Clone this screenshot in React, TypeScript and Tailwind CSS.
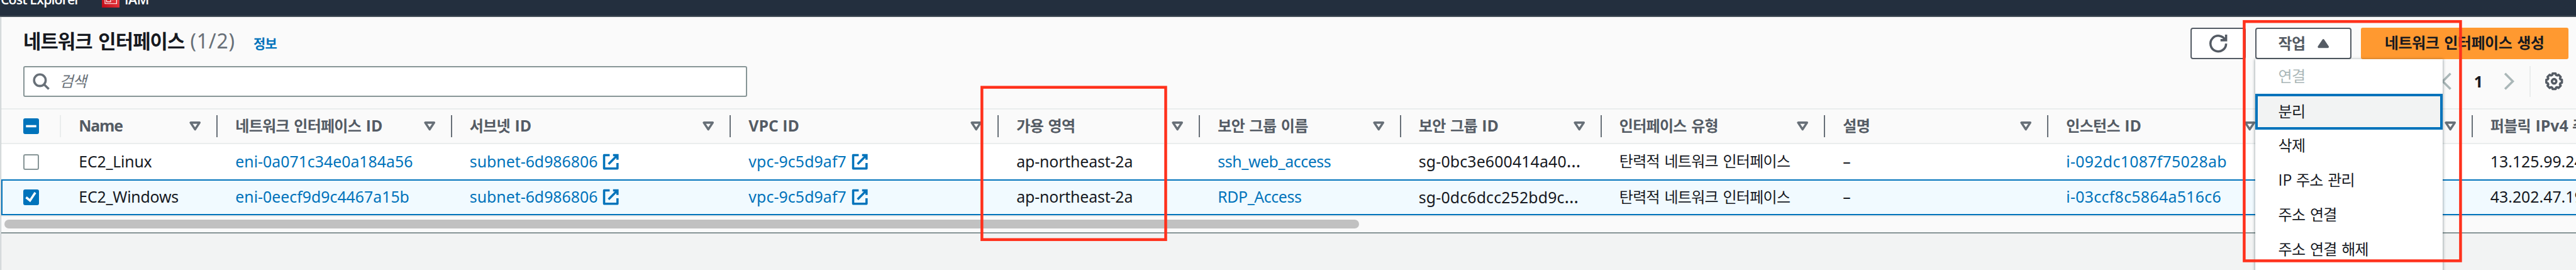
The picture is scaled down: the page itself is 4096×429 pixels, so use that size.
import type { ReactNode } from "react";

const GRID =
  "grid grid-cols-[95px_249px_372.5px_443.5px_426px_320px_319.5px_319px_355.5px_355px_355.5px_319px_1fr]";

/** Hangul runs are set a little tighter than the Latin text around them. */
function T({ children }: { children: string }) {
  return (
    <>
      {children.split(/([가-힣][가-힣 ]*)/).map((part, i) =>
        /[가-힣]/.test(part) ? (
          <span key={i} className="text-[0.966em] tracking-[-0.03em] [word-spacing:0.085em]">
            {part}
          </span>
        ) : (
          part
        ),
      )}
    </>
  );
}

function Icon({ children, className = "" }: { children: ReactNode; className?: string }) {
  return (
    <svg
      viewBox="0 0 16 16"
      className={`size-[28.4px] shrink-0 overflow-visible ${className}`}
      fill="none"
      stroke="currentColor"
      strokeWidth="2"
    >
      {children}
    </svg>
  );
}

function SortIcon() {
  return (
    <Icon className="text-[#687078]">
      <path d="M4 5h8l-4 6-4-6z" strokeLinejoin="round" />
    </Icon>
  );
}

function ExternalIcon() {
  return (
    <Icon className="ml-[7px]">
      <path d="M10 2h4v4M6 10l8-8" />
      <path d="M14 9.048V14H2V2h5" strokeLinejoin="round" />
    </Icon>
  );
}

const gear =
  Array.from({ length: 8 }, (_, k) =>
    [
      [-17, 5.9],
      [-11, 7.1],
      [11, 7.1],
      [17, 5.9],
    ].map(([offset, radius]) => {
      const a = ((k * 45 + offset) * Math.PI) / 180;
      return `${(8 + radius * Math.cos(a)).toFixed(2)} ${(8 + radius * Math.sin(a)).toFixed(2)}`;
    }),
  )
    .flat()
    .map((p, i) => (i ? "L" : "M") + p)
    .join("") + "Z";

function Checkbox({ state }: { state: "on" | "off" | "mixed" }) {
  if (state === "off") {
    return <span className="block size-[25px] rounded-[3px] border-2 border-[#879596] bg-white" />;
  }
  return (
    <span className="block size-[25px] rounded-[3px] bg-[#0073bb]">
      <svg viewBox="0 0 14 14" className="size-[25px]" fill="none" stroke="#fff" strokeWidth="2">
        <path d={state === "on" ? "M2.5 7L6 9.9L10.7 2.8" : "M2.4 7h9.2"} />
      </svg>
    </span>
  );
}

const headers = [
  "Name",
  "네트워크 인터페이스 ID",
  "서브넷 ID",
  "VPC ID",
  "가용 영역",
  "보안 그룹 이름",
  "보안 그룹 ID",
  "인터페이스 유형",
  "설명",
  "인스턴스 ID",
  "",
  "퍼블릭 IPv4 주소",
];

/** Letter spacing of the body cells, one entry per column. */
const tracking = [
  "tracking-[-0.2px]",
  "",
  "",
  "tracking-[0.1px]",
  "tracking-[-0.15px]",
  "tracking-[-0.4px]",
  "tracking-[0.15px]",
  "",
  "",
  "tracking-[0.3px]",
  "",
  "",
];

type Row = { selected: boolean; cells: { text: string; link?: boolean; external?: boolean }[] };

const rows: Row[] = [
  {
    selected: false,
    cells: [
      { text: "EC2_Linux" },
      { text: "eni-0a071c34e0a184a56", link: true },
      { text: "subnet-6d986806", link: true, external: true },
      { text: "vpc-9c5d9af7", link: true, external: true },
      { text: "ap-northeast-2a" },
      { text: "ssh_web_access", link: true },
      { text: "sg-0bc3e600414a40…" },
      { text: "탄력적 네트워크 인터페이스" },
      { text: "–" },
      { text: "i-092dc1087f75028ab", link: true },
      { text: "" },
      { text: "13.125.99.24" },
    ],
  },
  {
    selected: true,
    cells: [
      { text: "EC2_Windows" },
      { text: "eni-0eecf9d9c4467a15b", link: true },
      { text: "subnet-6d986806", link: true, external: true },
      { text: "vpc-9c5d9af7", link: true, external: true },
      { text: "ap-northeast-2a" },
      { text: "RDP_Access", link: true },
      { text: "sg-0dc6dcc252bd9c…" },
      { text: "탄력적 네트워크 인터페이스" },
      { text: "–" },
      { text: "i-03ccf8c5864a516c6", link: true },
      { text: "" },
      { text: "43.202.47.19" },
    ],
  },
];

const menuItems = ["삭제", "IP 주소 관리", "주소 연결", "주소 연결 해제"];

function TableRow({ row }: { row: Row }) {
  return (
    <div
      className={
        row.selected
          ? "h-[57px] border-y-2 border-l-2 border-[#0073bb] bg-[#f1faff]"
          : "h-[56px] bg-white"
      }
    >
      <div className={`${GRID} h-full ${row.selected ? "-ml-[2px]" : ""}`}>
        <div className="flex items-center pl-[35px]">
          <Checkbox state={row.selected ? "on" : "off"} />
        </div>
        {row.cells.map((c, i) => (
          <div
            key={i}
            className={`flex items-center overflow-hidden pl-[28.3px] ${c.link ? "text-[#0073bb]" : ""}`}
          >
            <span className={`pb-[3px] ${tracking[i]}`}>
              {c.text.endsWith("…") ? (
                <>
                  {c.text.slice(0, -1)}
                  <span className="text-[28.5px]">…</span>
                </>
              ) : (
                <T>{c.text}</T>
              )}
            </span>
            {c.external && <ExternalIcon />}
          </div>
        ))}
      </div>
    </div>
  );
}

export default function App() {
  return (
    <div className="relative h-[429px] w-[4096px] overflow-hidden bg-[#f2f3f3] font-['Noto_Sans','Noto_Sans_CJK_KR',sans-serif] text-[24.85px] leading-[34px] whitespace-nowrap text-[#16191f]">
      <nav className="flex h-[27px] items-start overflow-hidden border-b-2 border-[#545b64] bg-[#232f3e] pl-[1px] font-['Open_Sans'] text-[21.3px] leading-[28px] font-semibold text-white">
        <span className="-mt-[15.5px] w-[160.5px] tracking-[-0.9px]">Cost Explorer</span>
        <svg viewBox="0 0 32 32" className="-mt-[16px] size-[28.4px]">
          <defs>
            <linearGradient id="iam" x1="0" y1="1" x2="1" y2="0">
              <stop offset="0" stopColor="#bd0816" />
              <stop offset="1" stopColor="#ff5252" />
            </linearGradient>
          </defs>
          <rect width="32" height="32" fill="url(#iam)" />
          <g fill="none" stroke="#fff" strokeWidth="1.3">
            <path d="M5.6 7.5h20.8v17H5.6z" />
            <path d="M8.5 16h7.2v5.2H8.5zM10 16v-2.5a2 2 0 0 1 4 0V16M19.5 15v3.6M18 17h4" />
          </g>
        </svg>
        <span className="-mt-[15.5px] ml-[8px] tracking-[-0.4px]">IAM</span>
      </nav>

      <div className="flex">
        <div className="h-[402px] w-[2px] bg-white" />
        <main className="flex-1 shadow-[0_0_2px_1px_rgba(0,28,36,0.35)]">
          <header className="h-[147px] border-b-2 border-[#eaeded] bg-[#fafafa] pt-[17px] pr-[12.4px] pl-[35px]">
            <div className="flex h-[50px] items-center justify-between">
              <h1 className="flex items-baseline pb-[5px] text-[31.9px] leading-[40px] font-bold">
                <T>네트워크 인터페이스</T>
                <span className="ml-[9px] font-normal tracking-[0.8px] text-[#687078]">(1/2)</span>
                <a className="ml-[29px] text-[21.7px] text-[#0073bb]">
                  <T>정보</T>
                </a>
              </h1>
              <div className="flex gap-[14.5px] font-bold tracking-[0.22px]">
                <button className="flex h-[50px] w-[88.5px] items-center justify-center rounded-[4px] border-2 border-[#545b64] bg-white text-[#545b64]">
                  <Icon>
                    <path d="M10 5h5V0M15 8a7 7 0 1 1-.7-3" />
                  </Icon>
                </button>
                <div className="relative">
                  <button className="flex h-[50px] w-[153.5px] items-center rounded-[4px] border-2 border-[#545b64] bg-white pl-[35px] text-[#545b64]">
                    <span className="pb-[2px]">
                      <T>작업</T>
                    </span>
                    <Icon className="ml-[15px]">
                      <path d="M4 11h8L8 5z" fill="currentColor" strokeLinejoin="round" />
                    </Icon>
                  </button>
                  <div className="absolute top-[50px] left-0 z-10 h-[400px] w-[298.5px] bg-white font-normal tracking-normal shadow-[0_1px_4px_1px_rgba(0,28,36,0.35)]">
                    <div className="flex h-[55px] items-center pb-[2px] pl-[37px] text-[#aab7b8]">
                      <T>연결</T>
                    </div>
                    <div className="-mb-[2px] flex h-[57px] items-center border-4 border-[#0073bb] bg-[#f2f3f3] pb-[2px] pl-[33px]">
                      <T>분리</T>
                    </div>
                    {menuItems.map((m) => (
                      <div
                        key={m}
                        className="flex h-[55px] items-center pb-[2px] pl-[37px] font-['Open_Sans','Noto_Sans_CJK_KR',sans-serif]"
                      >
                        <span>
                          <T>{m}</T>
                        </span>
                      </div>
                    ))}
                  </div>
                </div>
                <button className="flex h-[50px] w-[330px] items-center justify-center rounded-[3px] bg-[#ff9930] pb-[2px] tracking-[0.3px]">
                  <span className="text-[24px] tracking-[-0.45px] [word-spacing:2.1px]">
                    네트워크 인터페이스 생성
                  </span>
                </button>
              </div>
            </div>

            <div className="mt-[11px] flex h-[49px] items-center justify-between">
              <div className="flex h-[49px] w-[1150.5px] items-center rounded-[3px] border-2 border-[#879596] bg-white pl-[12px] text-[#687078]">
                <Icon>
                  <circle cx="7" cy="7" r="5.2" />
                  <path d="M15 15l-4.5-4.5" />
                </Icon>
                <span className="ml-[15px] pb-[2px] italic">
                  <T>검색</T>
                </span>
              </div>
              <div className="flex items-center pr-[8px] text-[#aab7b8]">
                <Icon>
                  <path d="M11 1L4 8l7 7" />
                </Icon>
                <span className="w-[71px] pb-[2px] text-center font-bold text-[#16191f]">1</span>
                <Icon>
                  <path d="M4 1l7 7-7 7" />
                </Icon>
                <span className="mr-[23px] ml-[17.5px] h-[49px] w-[2px] bg-[#eaeded]" />
                <Icon className="text-[#545b64]">
                  <path d={gear} strokeLinejoin="round" />
                  <circle cx="8" cy="8" r="2" />
                </Icon>
              </div>
            </div>
          </header>

          <section>
            <div
              className={`${GRID} h-[55px] border-b-2 border-[#eaeded] bg-[#fafafa] font-['Open_Sans','Noto_Sans_CJK_KR',sans-serif] font-bold text-[#545b64]`}
            >
              <div className="flex items-center justify-between pl-[35px]">
                <Checkbox state="mixed" />
                <span className="h-[35px] w-[2px] bg-[#eaeded]" />
              </div>
              {headers.map((h, i) => (
                <div key={i} className="flex items-center overflow-hidden pl-[28.3px]">
                  <span className={`flex-1 pb-[3px] ${i === 0 ? "tracking-[-1.2px]" : ""}`}>
                    <T>{h}</T>
                  </span>
                  {i < headers.length - 1 && (
                    <>
                      <SortIcon />
                      <span className="ml-[19.3px] h-[35px] w-[2px] bg-[#687078]" />
                    </>
                  )}
                </div>
              ))}
            </div>
            {rows.map((r, i) => (
              <TableRow key={i} row={r} />
            ))}
          </section>

          <div className="h-[29px] border-t-2 border-b-2 border-t-[#e6e9e9] border-b-[#879596] bg-[#fafafa] pt-[5px] pl-[5px]">
            <div className="h-[14px] w-[2153.5px] rounded-[7px] bg-[#c1c1c1]" />
          </div>
          <div className="h-[58px] bg-[#f2f3f3]" />
        </main>
      </div>

      <svg
        className="pointer-events-none absolute inset-0 z-20 h-[429px] w-[4096px]"
        fill="none"
        stroke="#ff311c"
        strokeWidth="4.5"
      >
        <rect x="1561.3" y="138.7" width="292.2" height="242" />
        <rect x="3568.4" y="34.2" width="344" height="380.2" />
      </svg>
    </div>
  );
}
